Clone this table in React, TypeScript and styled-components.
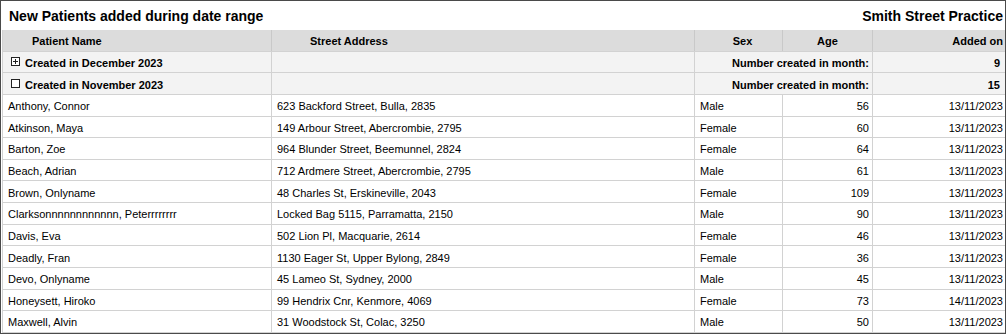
import React from 'react';
import styled, { createGlobalStyle } from 'styled-components';

const GlobalStyle = createGlobalStyle`
  body {
    margin: 0;
    background: #fff;
    font-family: "Liberation Sans", Arial, sans-serif;
    color: #000;
  }
`;

const Report = styled.div`
  box-sizing: border-box;
  width: 1006px;
  border: 1px solid #4a4a4a;
  padding-left: 1px;
  background: #fff;
`;

const TitleBar = styled.div`
  height: 29px;
  display: flex;
  align-items: center;
  justify-content: space-between;
  padding: 0 2px 0 7px;
  font-size: 14px;
  font-weight: bold;
`;

const Table = styled.div`
  border-left: 1px solid #d2d2d2;
`;

const Row = styled.div<{ $kind: 'head' | 'group' | 'data' }>`
  box-sizing: border-box;
  height: 21.64px;
  display: grid;
  grid-template-columns: 268px 422px 87px 89px 132px;
  column-gap: 1px;
  background: ${(p) => (p.$kind === 'head' ? '#c9c9c9' : '#d2d2d2')};
  border-bottom: 1px solid #d2d2d2;
  font-size: 11px;
  font-weight: ${(p) => (p.$kind === 'data' ? 'normal' : 'bold')};
`;

const Cell = styled.div<{ $kind: 'head' | 'group' | 'data'; $align?: string; $pad?: string; $span?: number }>`
  display: flex;
  align-items: center;
  justify-content: ${(p) => p.$align || 'flex-start'};
  padding: ${(p) => p.$pad || '0 5px'};
  padding-top: 2px;
  white-space: nowrap;
  overflow: hidden;
  grid-column: ${(p) => (p.$span ? `span ${p.$span}` : 'auto')};
  background: ${(p) => (p.$kind === 'head' ? '#dcdcdc' : p.$kind === 'group' ? '#f3f3f3' : '#fff')};
`;

const Toggle = styled.span`
  display: inline-flex;
  margin: -2px 5px 0 4px;
`;

const ToggleIcon = ({ expand }: { expand: boolean }) => (
  <Toggle>
    <svg width="9" height="9" viewBox="0 0 9 9">
      <rect x="0.5" y="0.5" width="8" height="8" fill="#fff" stroke="#222" />
      {expand && <path d="M2 4.5h5M4.5 2v5" stroke="#222" />}
    </svg>
  </Toggle>
);

const groups = [
  { label: 'Created in December 2023', count: 9, expand: true },
  { label: 'Created in November 2023', count: 15, expand: false },
];

const patients = [
  ['Anthony, Connor', '623 Backford Street, Bulla, 2835', 'Male', '56', '13/11/2023'],
  ['Atkinson, Maya', '149 Arbour Street, Abercrombie, 2795', 'Female', '60', '13/11/2023'],
  ['Barton, Zoe', '964 Blunder Street, Beemunnel, 2824', 'Female', '64', '13/11/2023'],
  ['Beach, Adrian', '712 Ardmere Street, Abercrombie, 2795', 'Male', '61', '13/11/2023'],
  ['Brown, Onlyname', '48 Charles St, Erskineville, 2043', 'Female', '109', '13/11/2023'],
  ['Clarksonnnnnnnnnnnn, Peterrrrrrrr', 'Locked Bag 5115, Parramatta, 2150', 'Male', '90', '13/11/2023'],
  ['Davis, Eva', '502 Lion Pl, Macquarie, 2614', 'Female', '46', '13/11/2023'],
  ['Deadly, Fran', '1130 Eager St, Upper Bylong, 2849', 'Female', '36', '13/11/2023'],
  ['Devo, Onlyname', '45 Lameo St, Sydney, 2000', 'Male', '45', '13/11/2023'],
  ['Honeysett, Hiroko', '99 Hendrix Cnr, Kenmore, 4069', 'Female', '73', '14/11/2023'],
  ['Maxwell, Alvin', '31 Woodstock St, Colac, 3250', 'Male', '50', '13/11/2023'],
];

export default function App() {
  return (
    <>
      <GlobalStyle />
      <Report>
        <TitleBar>
          <span>New Patients added during date range</span>
          <span>Smith Street Practice</span>
        </TitleBar>
        <Table>
          <Row $kind="head">
            <Cell $kind="head" $pad="0 0 0 29px">Patient Name</Cell>
            <Cell $kind="head" $pad="0 0 0 38px">Street Address</Cell>
            <Cell $kind="head" $align="center" $pad="0 0 0 8px">Sex</Cell>
            <Cell $kind="head" $align="center">Age</Cell>
            <Cell $kind="head" $align="flex-end" $pad="0 2px 0 0">Added on</Cell>
          </Row>
          {groups.map((g) => (
            <Row $kind="group" key={g.label}>
              <Cell $kind="group" $pad="0 4px">
                <ToggleIcon expand={g.expand} />
                {g.label}
              </Cell>
              <Cell $kind="group" />
              <Cell $kind="group" $span={2} $align="flex-end" $pad="0 3px 0 0">
                Number created in month:
              </Cell>
              <Cell $kind="group" $align="flex-end" $pad="0 5px 0 0">
                {g.count}
              </Cell>
            </Row>
          ))}
          {patients.map((p) => (
            <Row $kind="data" key={p[0]}>
              <Cell $kind="data">{p[0]}</Cell>
              <Cell $kind="data">{p[1]}</Cell>
              <Cell $kind="data">{p[2]}</Cell>
              <Cell $kind="data" $align="flex-end" $pad="0 3px 0 0">{p[3]}</Cell>
              <Cell $kind="data" $align="flex-end" $pad="0 2px 0 0">{p[4]}</Cell>
            </Row>
          ))}
        </Table>
      </Report>
    </>
  );
}
